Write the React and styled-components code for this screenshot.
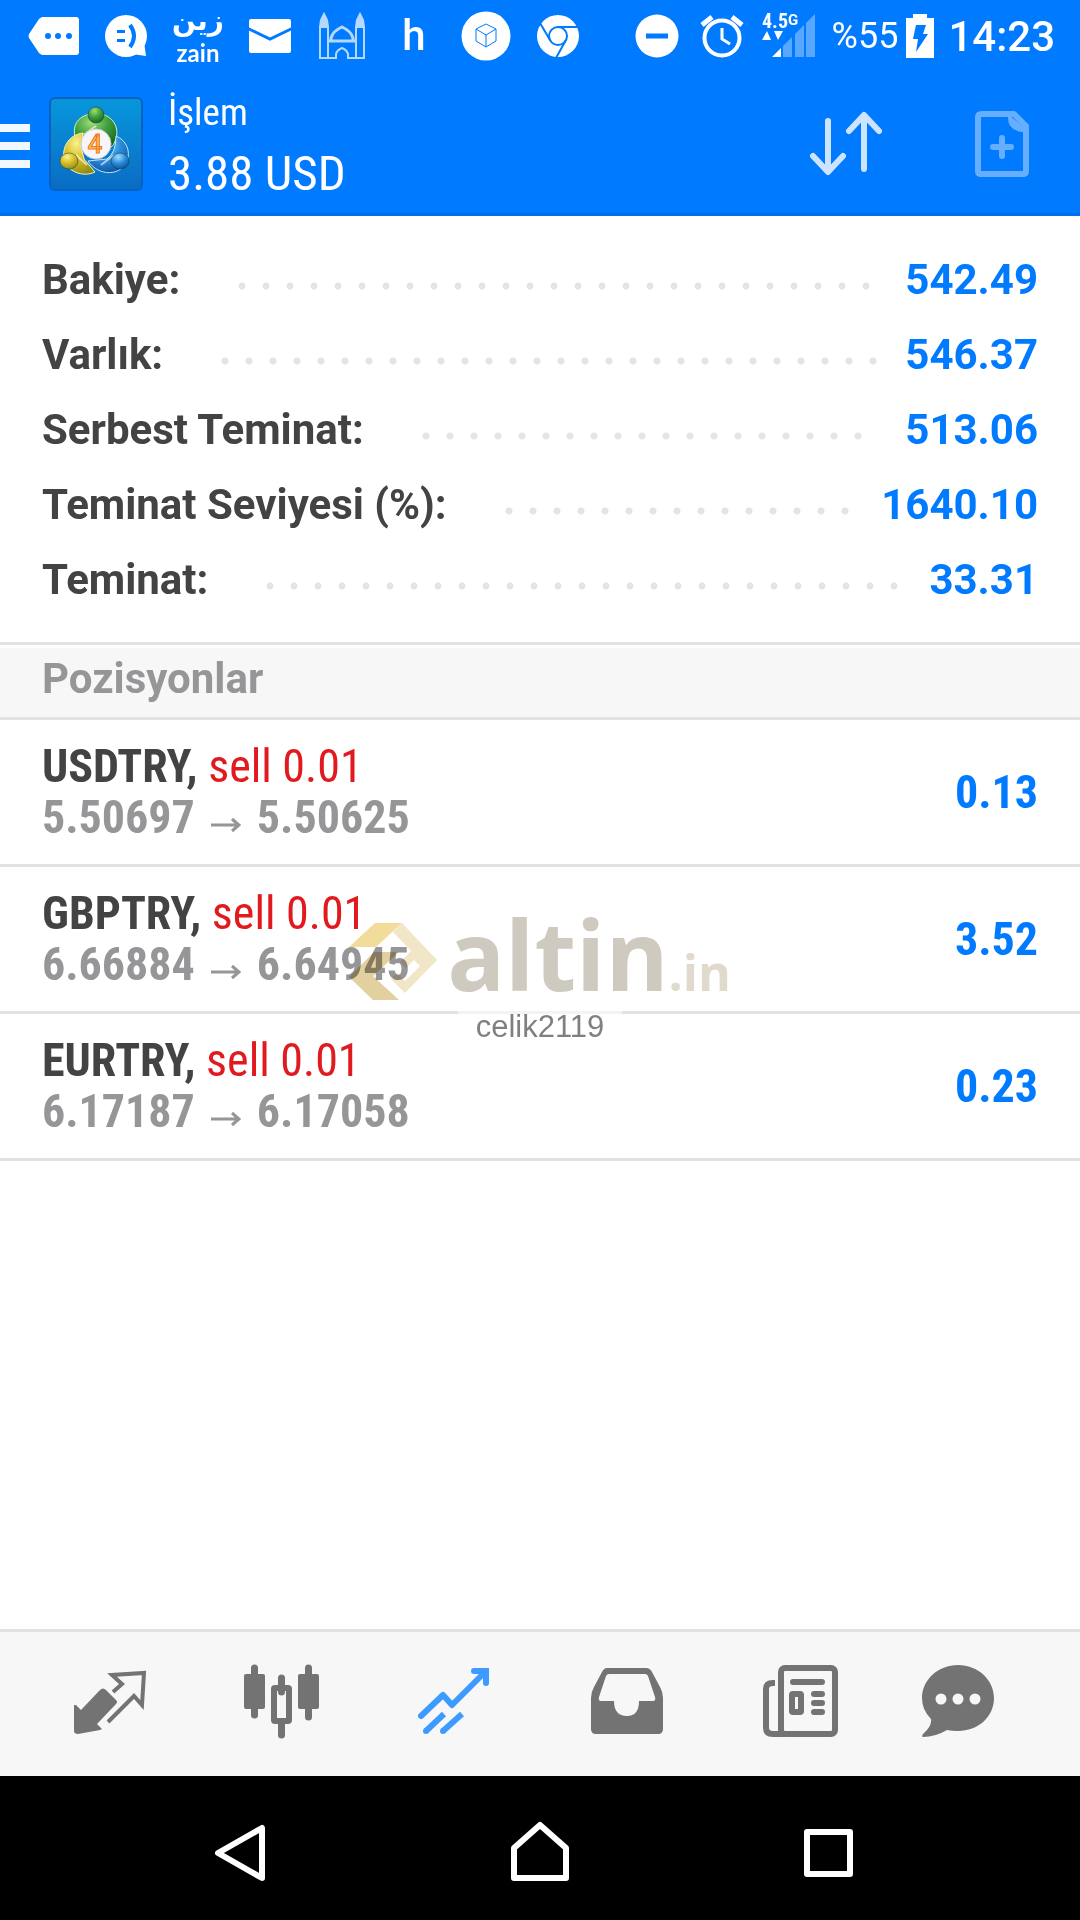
import React from 'react';
import styled, { createGlobalStyle } from 'styled-components';

const BLUE = '#007aff';
const CONDENSED = '"Roboto Condensed", "Liberation Sans Narrow", Roboto, sans-serif';

const GlobalStyle = createGlobalStyle`
  * {
    box-sizing: border-box;
  }
  body {
    margin: 0;
    background: #fff;
    font-family: Roboto, sans-serif;
  }
  button {
    border: 0;
    padding: 0;
    background: none;
    cursor: pointer;
  }
  svg {
    display: block;
  }
`;

const Page = styled.div`
  position: relative;
  display: flex;
  flex-direction: column;
  min-height: 100vh;
`;

const StatusBar = styled.div`
  display: flex;
  align-items: center;
  justify-content: space-between;
  height: 72px;
  padding: 0 25px 0 18px;
  background: ${BLUE};
  color: #fff;
`;

const Notifications = styled.div`
  display: flex;
`;

const Notification = styled.span`
  display: flex;
  flex-direction: column;
  align-items: center;
  justify-content: center;
  width: 72px;
  height: 72px;
  font-size: 42px;
  line-height: 48px;
  font-weight: 500;
`;

const Carrier = styled.span`
  font-family: ${(props) => (props.$arabic ? '"DejaVu Sans"' : 'Lato')}, sans-serif;
  font-size: ${(props) => (props.$arabic ? '28px' : '24px')};
  line-height: ${(props) => (props.$arabic ? '34px' : '30px')};
  font-weight: 700;
`;

const System = styled.div`
  display: flex;
  align-items: center;
  gap: 14px;
`;

const Battery = styled.span`
  display: flex;
  align-items: center;
  gap: 8px;
  font-size: 36px;
`;

const Clock = styled.span`
  font-size: 42px;
  font-weight: 500;
`;

const Header = styled.header`
  display: flex;
  align-items: center;
  height: 144px;
  padding-right: 30px;
  background: ${BLUE};
  box-shadow: inset 0 -3px 0 #006fe8;
  color: #fff;
`;

const AppLogo = styled.svg`
  margin: 0 25px 0 19px;
`;

const Titles = styled.div`
  flex: 1;
  font-family: ${CONDENSED};
`;

const Title = styled.h1`
  margin: 0;
  font-size: 37px;
  line-height: 60px;
  font-weight: 400;
`;

const Profit = styled.div`
  font-size: 49px;
  line-height: 62px;
`;

const Actions = styled.div`
  display: flex;
  gap: 60px;
`;

const Summary = styled.dl`
  margin: 0;
  padding: 26px 42px 25px;
  border-bottom: 3px solid #e2e2e2;
`;

const SummaryRow = styled.div`
  display: flex;
  align-items: center;
  font-size: 42px;
  line-height: 75px;
  font-weight: 700;
`;

const Label = styled.dt`
  color: #434343;
`;

const Leader = styled.span`
  flex: 1;
  height: 8px;
  margin: 12px 8px 0 58px;

  /* whole dots only */
  &::before {
    content: '';
    display: block;
    width: round(down, 100%, 24px);
    height: 8px;
    background: radial-gradient(circle at 4px 4px, #e4e4e4 3px, transparent 4px) 0 0 / 24px 8px;
  }
`;

const Amount = styled.dd`
  margin: 0;
  color: ${BLUE};
`;

const SectionTitle = styled.h2`
  margin: 0;
  padding: 0 42px 7px;
  border-top: 3px solid #fdfdfd;
  border-bottom: 3px solid #e2e2e2;
  background: #f7f7f7;
  color: #969699;
  font-size: 42px;
  line-height: 62px;
  font-weight: 700;
`;

const Positions = styled.ul`
  flex: 1;
  margin: 0;
  padding: 0;
  list-style: none;
  font-family: ${CONDENSED};
  font-size: 46px;
  line-height: 51px;
  font-weight: 700;
`;

const Position = styled.li`
  display: flex;
  align-items: center;
  justify-content: space-between;
  padding: 21px 42px;
  border-bottom: 3px solid #e2e2e2;
`;

const Symbol = styled.div`
  color: #434343;
`;

const Side = styled.span`
  color: #e01a1e;
  font-weight: 400;
`;

const Prices = styled.div`
  display: flex;
  align-items: center;
  gap: 16px;
  color: #969699;
`;

const Result = styled.div`
  color: ${BLUE};
`;

const Watermark = styled.div`
  position: absolute;
  inset: 0;
  display: flex;
  flex-direction: column;
  align-items: center;
  justify-content: center;
  pointer-events: none;
`;

const Brand = styled.div`
  display: flex;
  align-items: flex-end;
  gap: 10px;
  margin-top: 22px;
`;

const BrandMark = styled.svg`
  mix-blend-mode: multiply;
`;

const BrandName = styled.div`
  font-family: "Open Sans", sans-serif;
  font-size: 96px;
  line-height: 112px;
  font-weight: 700;
  color: #cfcabf;
`;

const BrandSuffix = styled.span`
  font-size: 50px;
  line-height: 50px;
  color: #dfdacb;
`;

const Caption = styled.div`
  padding: 0 18px;
  background: rgba(255, 255, 255, 0.6);
  font-family: "Liberation Sans", sans-serif;
  font-size: 31px;
  line-height: 34px;
  color: #808080;
`;

const TabBar = styled.nav`
  display: grid;
  grid-template-columns: repeat(6, 1fr);
  height: 147px;
  padding: 0 24px;
  border-top: 3px solid #e2e2e2;
  background: #f7f7f7;
`;

const Tab = styled.button`
  display: flex;
  align-items: center;
  justify-content: center;
  color: ${(props) => (props.$active ? '#3d9bff' : '#737373')};
`;

const SystemNav = styled.nav`
  display: grid;
  grid-template-columns: repeat(3, 1fr);
  height: 144px;
  padding: 0 108px;
  background: #000;
`;

const SystemButton = styled.button`
  display: flex;
  align-items: center;
  justify-content: center;
`;

const summary = [
  { label: 'Bakiye:', value: '542.49' },
  { label: 'Varlık:', value: '546.37' },
  { label: 'Serbest Teminat:', value: '513.06' },
  { label: 'Teminat Seviyesi (%):', value: '1640.10' },
  { label: 'Teminat:', value: '33.31' },
];

const positions = [
  { symbol: 'USDTRY', side: 'sell 0.01', open: '5.50697', current: '5.50625', profit: '0.13' },
  { symbol: 'GBPTRY', side: 'sell 0.01', open: '6.66884', current: '6.64945', profit: '3.52' },
  { symbol: 'EURTRY', side: 'sell 0.01', open: '6.17187', current: '6.17058', profit: '0.23' },
];

const StatusIcons = () => (
  <Notifications>
    <Notification>
      <svg width="72" height="72" viewBox="0 0 72 72">
        <path d="M25 17H58Q61 17 61 20V52Q61 55 58 55H25Q23 55 21 53L11 38Q10 36 11 34L21 19Q23 17 25 17Z" fill="#fff" />
        <g fill={BLUE}>
          <circle cx="30" cy="36" r="3" />
          <circle cx="40" cy="36" r="3" />
          <circle cx="51" cy="36" r="3" />
        </g>
      </svg>
    </Notification>
    <Notification>
      <svg width="72" height="72" viewBox="0 0 72 72">
        <circle cx="36" cy="36" r="21" fill="#fff" />
        <path d="M54 42L56 56L42 54Z" fill="#fff" />
        <path d="M27 31.500H35M27 40.500H35" stroke={BLUE} strokeWidth="3" />
        <path d="M40 25Q48 36 40 47" fill="none" stroke={BLUE} strokeWidth="4" />
      </svg>
    </Notification>
    <Notification>
      <Carrier $arabic lang="ar">زين</Carrier>
      <Carrier>zain</Carrier>
    </Notification>
    <Notification>
      <svg width="72" height="72" viewBox="0 0 72 72">
        <rect x="15" y="19" width="42" height="34" rx="2" fill="#fff" />
        <path d="M14 28.500L36 39L58 28.500" fill="none" stroke={BLUE} strokeWidth="3" />
      </svg>
    </Notification>
    <Notification>
      <svg width="72" height="72" viewBox="0 0 72 72" fill="none" stroke="#b5d8ff" strokeWidth="2">
        <path d="M14 58V27H22V58ZM50 58V27H58V58Z" />
        <path d="M14 27L15 20L18 14L21 20L22 27M50 27L51 20L54 14L57 20L58 27M14 23H22M50 23H58" fill="#b5d8ff" />
        <path d="M22 41H50M25 41V38Q27 31 36 27Q45 31 47 38V41" strokeWidth="3" />
        <path d="M22 58H30V54Q31 50 36 48Q41 50 42 54V58H50" />
      </svg>
    </Notification>
    <Notification>h</Notification>
    <Notification>
      <svg width="72" height="72" viewBox="0 0 72 72">
        <circle cx="36" cy="36" r="24.500" fill="#fff" />
        <path d="M36 24L46 29V41L36 47L26 41V29ZM26 29L36 35L46 29M36 35V47" fill="none" stroke={BLUE} strokeWidth="1" />
      </svg>
    </Notification>
    <Notification>
      <svg width="72" height="72" viewBox="0 0 72 72" fill="none" stroke={BLUE} strokeWidth="2">
        <circle cx="36" cy="36" r="21" fill="#fff" stroke="none" />
        <circle cx="36" cy="36" r="9" />
        <path d="M36 27H57M28 40L18 23M44 40L34 58" />
      </svg>
    </Notification>
  </Notifications>
);

const SystemIcons = () => (
  <System>
    <svg width="50" height="44" viewBox="-1 0 50 44">
      <circle cx="22" cy="22" r="21.500" fill="#fff" />
      <path d="M11 22H33" stroke={BLUE} strokeWidth="5" />
    </svg>
    <svg width="50" height="44" viewBox="-2 0 50 44" fill="none" stroke="#fff">
      <circle cx="22" cy="24" r="17.500" strokeWidth="4" />
      <path d="M22 14V25L30 30" strokeWidth="3" />
      <path d="M2 11L12 3M32 3L42 11" strokeWidth="5" />
    </svg>
    <svg width="56" height="54" viewBox="0 -3 56 54" fill="#fff">
      <text x="0" y="16" fontFamily="Roboto Condensed, Roboto" fontSize="20" fontWeight="700">4.5</text>
      <text x="26" y="13" fontFamily="Roboto" fontSize="15" fontWeight="700">G</text>
      <path d="M0 28L5 19L9 28ZM12 19H21L16 28Z" />
      <path d="M10 45L19 36V45Z" />
      <path d="M21 34L30 25V45H21ZM33 22L42 13V45H33ZM44 11L53 2V45H44Z" opacity=".35" />
    </svg>
    <Battery>
      %55
      <svg width="28" height="44" viewBox="0 0 28 44">
        <path d="M7 0H21V4H28V44H0V4H7Z" fill="#fff" />
        <path d="M10 11H20L17 20H22L10 38L12 25H7Z" fill={BLUE} />
      </svg>
    </Battery>
    <Clock>14:23</Clock>
  </System>
);

const Logo = () => (
  <AppLogo width="94" height="94" viewBox="0 0 94 94">
    <defs>
      <linearGradient id="tile" x1="0" y1="0" x2="0" y2="1">
        <stop offset="0" stopColor="#0797dc" />
        <stop offset="1" stopColor="#0a6cc4" />
      </linearGradient>
      <radialGradient id="green" cx=".4" cy=".25" r=".8">
        <stop offset="0" stopColor="#9fdc7c" />
        <stop offset=".5" stopColor="#3f9e3c" />
        <stop offset="1" stopColor="#14651f" />
      </radialGradient>
      <radialGradient id="yellow" cx=".4" cy=".25" r=".8">
        <stop offset="0" stopColor="#fbf291" />
        <stop offset=".5" stopColor="#d8bd25" />
        <stop offset="1" stopColor="#8d8a15" />
      </radialGradient>
      <radialGradient id="blue" cx=".4" cy=".25" r=".8">
        <stop offset="0" stopColor="#9fdcff" />
        <stop offset=".5" stopColor="#2d8edb" />
        <stop offset="1" stopColor="#0a4f9e" />
      </radialGradient>
    </defs>
    <rect x="1" y="1" width="92" height="92" rx="5" fill="url(#tile)" stroke="#0860bf" strokeWidth="2" />
    <path d="M26 40C22 22 37 16 47 17C61 16 71 28 67 42Q65 49 61 51L55 35L37 36Z" fill="url(#green)" stroke="#d5f3c6" strokeWidth="1" />
    <path d="M34 36C19 38 13 51 15 62C17 74 34 81 46 75L35 62L32 50Z" fill="url(#yellow)" stroke="#fdf6b5" strokeWidth="1" />
    <path d="M67 39C77 43 82 54 78 64C72 79 50 80 39 64L58 62Q67 56 67 39Z" fill="url(#blue)" stroke="#bfe6ff" strokeWidth="1" />
    <path d="M47 29L37 36M27 58L38 68M65 58L52 68" stroke="#fff" strokeWidth="2" opacity=".6" />
    <g stroke="#0b3d3a" strokeOpacity=".5" strokeWidth="1">
      <circle cx="47" cy="18" r="8" fill="url(#green)" />
      <ellipse cx="20" cy="64" rx="9" ry="8" fill="url(#yellow)" />
      <ellipse cx="71" cy="64" rx="9" ry="8" fill="url(#blue)" />
    </g>
    <circle cx="47" cy="47" r="15" fill="#f7f5fa" stroke="#ccc" strokeWidth="1" />
    <text x="46" y="56" textAnchor="middle" fontFamily="Roboto" fontSize="26" fontWeight="500" fill="#ffb65c" stroke="#ee7a1c" strokeWidth="1">4</text>
  </AppLogo>
);

const TabIcons = {
  quotes: (
    <svg width="96" height="96" viewBox="0 0 96 96">
      <path d="M38 34Q41 31 44 34L54 44Q56 46 54 48L35 68L40 73L38 74L16 78Q12 78 12 75V49L14 49L19 54Z" fill="currentColor" />
      <path d="M51 36L60 28L50 19L82 17L80 49L72 40L46 66" fill="none" stroke="currentColor" strokeWidth="4" />
    </svg>
  ),
  charts: (
    <svg width="96" height="96" viewBox="0 0 96 96">
      <path d="M20.500 12V59M74.500 12V61M47.500 22V36M47.500 67V79" stroke="currentColor" strokeWidth="7" strokeLinecap="round" />
      <rect x="10" y="18" width="21" height="35" rx="2" fill="currentColor" />
      <rect x="64" y="18" width="21" height="35" rx="2" fill="currentColor" />
      <rect x="40" y="32" width="15" height="33" rx="1" fill="none" stroke="currentColor" strokeWidth="6" />
    </svg>
  ),
  trade: (
    <svg width="96" height="96" viewBox="0 0 96 96" fill="none" stroke="currentColor" strokeWidth="6">
      <path d="M15 60L37 39L46 49L78 17" strokeLinecap="round" strokeLinejoin="round" />
      <path d="M68 15H80V27" strokeLinecap="round" />
      <path d="M70 14H82V26Z" fill="currentColor" stroke="none" />
      <path d="M20 75L38 58M37 75L56 58" />
      <path d="M20 75h0M37 75h0" strokeLinecap="round" />
    </svg>
  ),
  history: (
    <svg width="96" height="96" viewBox="-1 1 96 96">
      <path
        d="M28 13H67Q71 13 73 17L81 32Q84 37 84 43V74Q84 79 79 79H17Q12 79 12 74V43Q12 37 15 32L23 17Q25 13 28 13ZM30 19Q28 19 27 21L20 42Q19 46 22 46H35Q35 61 48 61Q60 61 60 46H74Q77 46 76 42L69 21Q68 19 66 19Z"
        fill="currentColor"
        fillRule="evenodd"
      />
    </svg>
  ),
  news: (
    <svg width="96" height="96" viewBox="-2 1 96 96" fill="none" stroke="currentColor" strokeWidth="6">
      <rect x="29" y="13" width="54" height="66" rx="4" />
      <path d="M23 28H21Q14 28 14 34V73Q14 79 21 79H32" />
      <path d="M41 27H70M62 39H70M62 48H70M62 57H70" strokeLinecap="round" />
      <rect x="40" y="39" width="9" height="18" rx="1" />
    </svg>
  ),
  messages: (
    <svg width="96" height="96" viewBox="0 1 96 96">
      <path d="M36 10C56 10 72 25 72 43C72 62 56 76 36 76Q30 76 25 75Q13 82 1 82Q-1 81 2 78Q10 71 9 64Q0 55 0 43C0 25 16 10 36 10Z" fill="currentColor" />
      <g fill="#f7f7f7">
        <circle cx="19" cy="44" r="5.500" />
        <circle cx="36" cy="44" r="5.500" />
        <circle cx="53" cy="44" r="5.500" />
      </g>
    </svg>
  ),
};

const tabs = [
  { id: 'quotes', name: 'Fiyatlar' },
  { id: 'charts', name: 'Grafik' },
  { id: 'trade', name: 'İşlem' },
  { id: 'history', name: 'Geçmiş' },
  { id: 'news', name: 'Haberler' },
  { id: 'messages', name: 'Mesajlar' },
];

const App = () => {
  return (
    <Page>
      <GlobalStyle />
      <StatusBar>
        <StatusIcons />
        <SystemIcons />
      </StatusBar>
      <Header>
        <button type="button" aria-label="Menü">
          <svg width="30" height="48" viewBox="0 -4 30 48" fill="#f2f8ff">
            <path d="M0 0H30V8H0ZM0 18H30V26H0ZM0 36H30V44H0Z" />
          </svg>
        </button>
        <Logo />
        <Titles>
          <Title>İşlem</Title>
          <Profit>3.88 USD</Profit>
        </Titles>
        <Actions>
          <button type="button" aria-label="Sırala">
            <svg width="96" height="96" viewBox="0 0 96 96" fill="none" stroke="#cce4ff" strokeWidth="6" strokeLinecap="round" strokeLinejoin="round">
              <path d="M30 25V75M15 60L30 76L45 60M66 73V20M51 35L66 19L81 35" />
            </svg>
          </button>
          <button type="button" aria-label="Yeni emir">
            <svg width="96" height="96" viewBox="0 0 96 96" fill="none" stroke="#66afff" strokeWidth="6" strokeLinejoin="round">
              <path d="M28 18H60L72 30V75Q72 78 69 78H27Q24 78 24 75V21Q24 18 28 18Z" />
              <path d="M54 18L73 34V36H68Q54 34 54 22Z" fill="#66afff" stroke="none" />
              <path d="M48 42V60M39 51H57" strokeLinecap="round" />
            </svg>
          </button>
        </Actions>
      </Header>
      <Summary>
        {summary.map((row) => (
          <SummaryRow key={row.label}>
            <Label>{row.label}</Label>
            <Leader />
            <Amount>{row.value}</Amount>
          </SummaryRow>
        ))}
      </Summary>
      <SectionTitle>Pozisyonlar</SectionTitle>
      <Positions>
        {positions.map((position) => (
          <Position key={position.symbol}>
            <div>
              <Symbol>
                {position.symbol}, <Side>{position.side}</Side>
              </Symbol>
              <Prices>
                <span>{position.open}</span>
                <svg width="30" height="30" viewBox="0 0 30 30" fill="none" stroke="currentColor" strokeWidth="3">
                  <path d="M0 22H28M21 16L28 22L21 28" />
                </svg>
                <span>{position.current}</span>
              </Prices>
            </div>
            <Result>{position.profit}</Result>
          </Position>
        ))}
      </Positions>
      <Watermark>
        <Brand>
          <BrandMark width="88" height="87" viewBox="0 0 88 87">
            <path d="M26 0H53L27 24H0Z" fill="#f2dc9a" />
            <path d="M53 0L88 37L56 70L42 56L48 50L56 58L71 43L65 37L57 45L51 39L62 28L44 9Z" fill="#f2e6c8" />
            <path d="M25 29H50L24 53L50 77H24L0 54Z" fill="#e3d09f" />
          </BrandMark>
          <BrandName>
            altin<BrandSuffix>.in</BrandSuffix>
          </BrandName>
        </Brand>
        <Caption>celik2119</Caption>
      </Watermark>
      <TabBar>
        {tabs.map((tab) => (
          <Tab key={tab.id} type="button" aria-label={tab.name} $active={tab.id === 'trade'}>
            {TabIcons[tab.id]}
          </Tab>
        ))}
      </TabBar>
      <SystemNav>
        <SystemButton type="button" aria-label="Geri">
          <svg width="96" height="96" viewBox="0 0 96 96" fill="none" stroke="#fff" strokeWidth="6" strokeLinejoin="round">
            <path d="M14 53L58 28V78Z" />
          </svg>
        </SystemButton>
        <SystemButton type="button" aria-label="Ana ekran">
          <svg width="96" height="96" viewBox="0 0 96 96" fill="none" stroke="#fff" strokeWidth="6" strokeLinejoin="round">
            <path d="M48 25L74 48V78H22V48Z" />
          </svg>
        </SystemButton>
        <SystemButton type="button" aria-label="Son uygulamalar">
          <svg width="96" height="96" viewBox="0 0 96 96" fill="none" stroke="#fff" strokeWidth="6" strokeLinejoin="round">
            <path d="M27 32H70V74H27Z" />
          </svg>
        </SystemButton>
      </SystemNav>
    </Page>
  );
};

export default App;
